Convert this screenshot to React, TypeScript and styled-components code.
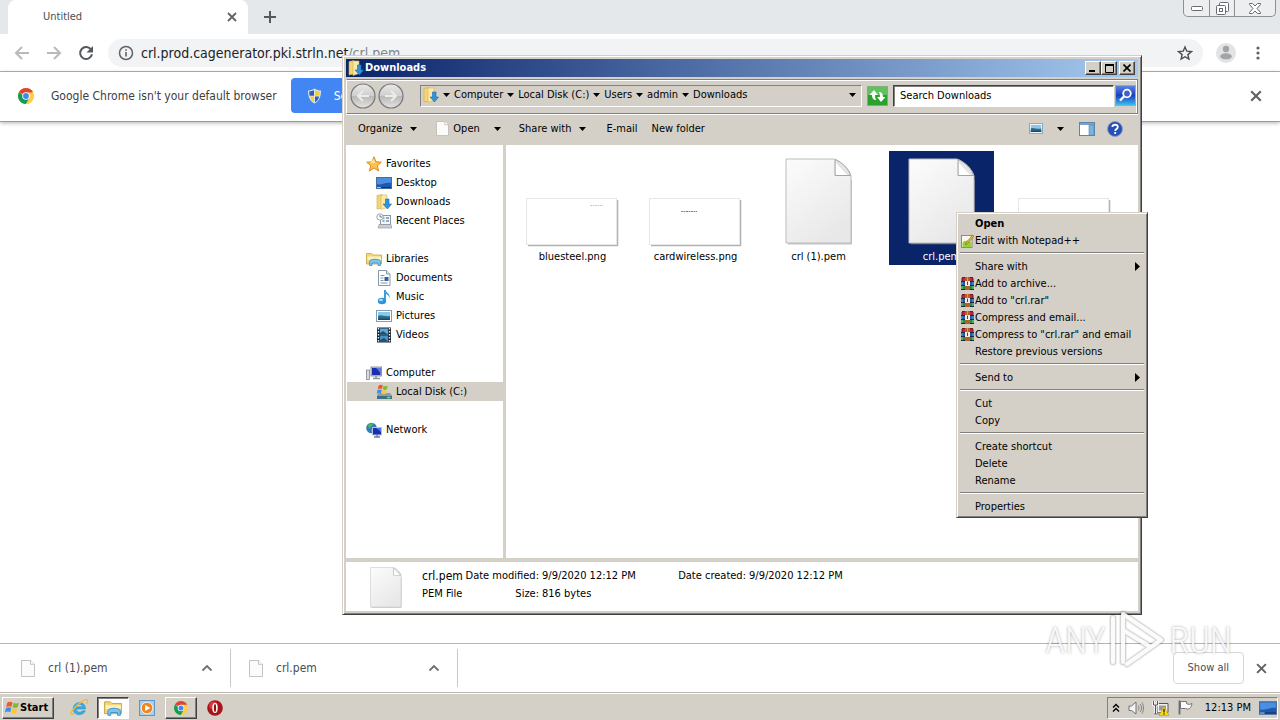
import React from "react";
import styled, { createGlobalStyle, css } from "styled-components";

const FACE = "#d4d0c8";
const UI = `"DejaVu Sans Condensed", "DejaVu Sans", "Noto Sans", sans-serif`;

const GlobalStyle = createGlobalStyle`
  * { box-sizing: border-box; }
  body { margin: 0; font: 11px/14px ${UI}; color: #000; background: #fff; }
  button, input { font: inherit; color: inherit; }
  button { background: none; border: 0; padding: 0; margin: 0; text-align: left; }
  a { color: inherit; text-decoration: none; }
  svg { display: block; flex: none; }
`;

/* ---------- Browser ---------- */

const Desktop = styled.div`
  position: relative;
  display: flex;
  flex-direction: column;
  min-height: 100vh;
  overflow: hidden;
`;

const TabStrip = styled.header`
  display: flex;
  align-items: flex-start;
  height: 34px;
  padding: 0 4px 0 8px;
  background: #e5e8eb;
`;

const Tab = styled.div`
  display: flex;
  align-items: center;
  justify-content: space-between;
  width: 240px;
  height: 34px;
  padding: 0 11px 0 35px;
  background: #fff;
  border-radius: 8px 8px 0 0;
  color: #4a4d51;
`;

const NewTab = styled.button`
  margin: 11px 0 0 16px;
`;

const CaptionGroup = styled.div`
  display: flex;
  height: 17px;
  margin-left: auto;
  border: 1px solid #8d9094;
  border-top: 0;
  border-radius: 0 0 5px 5px;
  background: #eceef0;
`;

const CaptionButton = styled.button<{ $wide?: boolean }>`
  display: flex;
  align-items: center;
  justify-content: center;
  width: ${(p) => (p.$wide ? 41 : 25)}px;
  & + & { border-left: 1px solid #8d9094; }
`;

const BrowserBar = styled.div`
  display: flex;
  align-items: center;
  height: 38px;
  padding: 0 20px 0 14px;
  background: #fff;
  border-bottom: 1px solid #b4b5b7;
`;

const NavButtons = styled.div`
  display: flex;
  gap: 16px;
  margin-right: 14px;
`;

const Omnibox = styled.div`
  display: flex;
  flex: 1;
  align-items: center;
  height: 28px;
  padding: 0 10px;
  gap: 7px;
  border-radius: 14px;
  background: #f1f3f4;
  font-size: 14px;
  line-height: 18px;
  color: #202124;
`;

const UrlPath = styled.span`
  color: #80868b;
`;

const UrlText = styled.span`
  flex: 1;
`;

const BrowserMenu = styled.div`
  display: flex;
  align-items: center;
  gap: 20px;
  margin-left: 13px;
`;

const InfoBar = styled.div`
  display: flex;
  align-items: center;
  height: 50px;
  padding: 0 18px 2px;
  background: #fff;
  border-bottom: 1px solid #9b9b9b;
  box-shadow: 0 1px 4px rgba(0, 0, 0, 0.3);
  font-size: 12px;
  color: #3c4043;
`;

const InfoText = styled.span`
  margin: 0 14px 0 17px;
`;

const DefaultButton = styled.button`
  display: flex;
  align-items: center;
  gap: 12px;
  height: 35px;
  padding: 0 16px;
  border-radius: 4px;
  background: #4285f4;
  color: #fff;
`;

const Push = styled.div`
  display: flex;
  margin-left: auto;
`;

const PageArea = styled.main`
  flex: 1;
  min-height: 300px;
`;

const Shelf = styled.footer`
  display: flex;
  align-items: center;
  height: 49px;
  padding-right: 13px;
  border-top: 1px solid #b4b5b7;
  background: #fff;
  color: #4a4d51;
`;

const ShelfItem = styled.button`
  display: flex;
  align-items: center;
  gap: 13px;
  width: 227px;
  height: 38px;
  padding: 0 17px 0 18px;
  border-right: 1px solid #c8c9cb;
  font-size: 12px;
  &:first-child { width: 231px; padding-left: 21px; }
`;

const ShelfName = styled.span`
  flex: 1;
`;

const ShowAll = styled.button`
  height: 32px;
  padding: 0 14px;
  margin: 0 12px 0 auto;
  border: 1px solid #d5d7da;
  border-radius: 4px;
`;

/* ---------- Taskbar ---------- */

const Taskbar = styled.nav`
  display: flex;
  align-items: center;
  height: 28px;
  padding: 2px 2px 0;
  background: ${FACE};
  border-top: 1px solid #b9b6b0;
  box-shadow: inset 0 1px #fff;
`;

const raised = css`
  border: 1px solid;
  border-color: #fff #404040 #404040 #fff;
  box-shadow: inset -1px -1px #808080;
`;

const sunken = css`
  border: 1px solid;
  border-color: #404040 #fff #fff #404040;
  box-shadow: inset 1px 1px #808080;
`;

const StartButton = styled.button`
  display: flex;
  align-items: center;
  width: 52px;
  height: 22px;
  padding-left: 1px;
  margin-right: 8px;
  font-weight: bold;
  background: ${FACE};
  ${raised}
`;

const TaskButton = styled.button<{ $state?: "active" | "open" }>`
  display: flex;
  align-items: center;
  justify-content: center;
  width: ${(p) => (p.$state ? 32 : 34)}px;
  height: 22px;
  margin-right: 1px;
  ${(p) => p.$state === "open" && raised}
  ${(p) => p.$state === "active" && css`${sunken} background: #fdfdfc;`}
`;

const Tray = styled.div`
  display: flex;
  align-items: center;
  gap: 8px;
  height: 22px;
  margin-left: auto;
  padding: 0 0 0 4px;
  border: 1px solid;
  border-color: #808080 #fff #fff #808080;
`;

const Clock = styled.time`
  margin-left: 4px;
`;

/* ---------- Explorer window ---------- */

const Window = styled.section`
  position: absolute;
  top: 55px;
  right: 138px;
  bottom: 105px;
  left: 342px;
  display: flex;
  flex-direction: column;
  padding: 3px;
  border: 1px solid;
  border-color: ${FACE} #404040 #404040 ${FACE};
  background: ${FACE};
  box-shadow: inset 1px 1px #fff, inset -1px -1px #808080;
`;

const TitleBar = styled.div`
  display: flex;
  align-items: center;
  height: 18px;
  padding: 0 3px 0 2px;
  background: linear-gradient(90deg, #0a246a, #a6caf0);
  color: #fff;
`;

const Title = styled.h1`
  flex: 1;
  margin: 0 0 0 1px;
  font-size: 11px;
  line-height: 14px;
`;

const TitleButton = styled.button`
  display: flex;
  align-items: center;
  justify-content: center;
  width: 16px;
  height: 14px;
  background: ${FACE};
  ${raised}
  &:last-child { margin-left: 2px; }
`;

const AddressBand = styled.div`
  display: flex;
  align-items: center;
  height: 35px;
  margin-top: 2px;
  padding: 0 1px 2px 3px;
  border: 1px solid #808080;
  border-left-color: #fff;
  box-shadow: inset 0 1px #fff, inset -1px 0 #fff, 0 1px #fff;
`;

const History = styled.div`
  display: flex;
  gap: 2px;
`;

const Breadcrumbs = styled.div`
  display: flex;
  flex: 1;
  align-items: center;
  height: 22px;
  margin: 0 5px 0 16px;
  padding: 0 5px 1px 2px;
  border: 1px solid;
  border-color: #808080 #fff #fff #808080;
`;

const Crumb = styled.button`
  display: flex;
  align-items: center;
  gap: 4px;
  margin-left: 4px;
`;

const SearchInput = styled.input`
  width: 221px;
  height: 22px;
  margin: 0 1px 0 5px;
  padding: 0 6px;
  background: #fff;
  border-radius: 0;
  ${sunken}
  &::placeholder { color: #000; opacity: 1; }
`;

const CommandBar = styled.div`
  display: flex;
  align-items: center;
  height: 31px;
  padding: 0 15px 2px 12px;
`;

const Command = styled.button<{ $space: number; $gap?: number }>`
  display: flex;
  align-items: center;
  gap: ${(p) => p.$gap ?? 8}px;
  margin-right: ${(p) => p.$space}px;
`;

const WindowBody = styled.div`
  display: flex;
  flex: 1;
  background: #fff;
`;

const NavPane = styled.nav`
  display: flex;
  flex-direction: column;
  gap: 19px;
  width: 160px;
  padding-top: 9px;
  padding-left: 1px;
  border-right: 3px solid ${FACE};
`;

const NavGroup = styled.div`
  display: flex;
  flex-direction: column;
`;

const NavRow = styled.a<{ $child?: boolean; $selected?: boolean }>`
  display: flex;
  align-items: center;
  gap: 4px;
  height: 19px;
  padding-top: 1px;
  padding-left: ${(p) => (p.$child ? 29 : 19)}px;
  background: ${(p) => (p.$selected ? FACE : "transparent")};
`;

const Files = styled.div`
  display: flex;
  flex: 1;
  align-items: flex-start;
  gap: 18px;
  padding: 6px 14px;
`;

const FileTile = styled.button<{ $selected?: boolean }>`
  display: flex;
  flex-direction: column;
  align-items: center;
  justify-content: flex-end;
  gap: 3px;
  width: 105px;
  height: 114px;
  padding-bottom: 1px;
  background: ${(p) => (p.$selected ? "#0a246a" : "transparent")};
  color: ${(p) => (p.$selected ? "#fff" : "#000")};
`;

const FileLabel = styled.span`
  height: 14px;
`;

const Details = styled.div`
  display: flex;
  align-items: flex-start;
  gap: 20px;
  height: 53px;
  padding: 5px 0 0 24px;
  border-top: 4px solid ${FACE};
  background: #fff;
`;

const DetailGrid = styled.div`
  display: grid;
  grid-template-columns: 41px 74px 131px 72px auto;
  column-gap: 2px;
  line-height: 18px;
`;

const DetailName = styled.span`
  font-size: 12px;
`;

const DetailLabel = styled.span`
  text-align: right;
`;

const DetailValue = styled.span`
  padding-left: 1px;
`;

/* ---------- Context menu ---------- */

const Menu = styled.div`
  position: absolute;
  top: 212px;
  left: 956px;
  width: 192px;
  padding: 2px;
  border: 1px solid;
  border-color: ${FACE} #404040 #404040 ${FACE};
  background: ${FACE};
  box-shadow: inset 1px 1px #fff, inset -1px -1px #808080;
`;

const MenuRow = styled.button<{ $bold?: boolean }>`
  display: flex;
  align-items: center;
  width: 100%;
  height: 17px;
  padding: 0 5px 0 2px;
  font-weight: ${(p) => (p.$bold ? "bold" : "normal")};
`;

const MenuIcon = styled.span`
  width: 14px;
`;

const MenuText = styled.span`
  flex: 1;
`;

const MenuRule = styled.hr`
  height: 2px;
  margin: 3px 1px 4px;
  border: 0;
  border-top: 1px solid #808080;
  border-bottom: 1px solid #fff;
`;

const Watermark = styled.div`
  position: absolute;
  right: 48px;
  bottom: 48px;
  display: flex;
  align-items: center;
  gap: 4px;
  font: 300 36px/40px "Roboto Condensed", Roboto, sans-serif;
  color: rgba(255, 255, 255, 0.9);
  text-shadow: 0 0 3px rgba(0, 0, 0, 0.35);
  pointer-events: none;
`;

/* ---------- Icons ---------- */

const Arrow = ({ w = 7 }: { w?: number }) => (
  <svg width={w} height={4} viewBox="0 0 7 4"><path d="M0 0h7L3.500 4z" fill="#000" /></svg>
);

const SubArrow = () => (
  <svg width="5" height="9" viewBox="0 0 5 9"><path d="M0 0v9l5-4.500z" fill="#000" /></svg>
);

const Cross = ({ size = 10, color = "#5f6368" }) => (
  <svg width={size} height={size} viewBox="0 0 10 10"><path d="M1 1l8 8M9 1l-8 8" stroke={color} strokeWidth="1.800" /></svg>
);

const BackIcon = ({ flip = false }) => (
  <svg width="16" height="16" viewBox="0 0 16 16">
    <path d={flip ? "M1 8h13M8 2l6 6-6 6" : "M15 8H2M8 2L2 8l6 6"} fill="none" stroke="#b8babd" strokeWidth="2" />
  </svg>
);

const ReloadIcon = () => (
  <svg width="16" height="16" viewBox="0 0 16 16">
    <path d="M13.200 4.800A6 6 0 1 0 14 9.300" fill="none" stroke="#55585c" strokeWidth="2" />
    <path d="M15 1v6.500H8.500z" fill="#55585c" />
  </svg>
);

const InfoIcon = () => (
  <svg width="16" height="16" viewBox="0 0 16 16">
    <circle cx="8" cy="8" r="6.500" fill="none" stroke="#5f6368" strokeWidth="1.500" />
    <path d="M8 7v4.500M8 4.300v1.500" stroke="#5f6368" strokeWidth="1.600" />
  </svg>
);

const StarIcon = () => (
  <svg width="16" height="16" viewBox="0 0 16 16">
    <path d="M8 2l1.800 4.200 4.600.4-3.500 3 1 4.500L8 11.700l-3.900 2.400 1-4.500-3.500-3 4.600-.4z" fill="none" stroke="#4a4d51" strokeWidth="1.400" />
  </svg>
);

const AvatarIcon = () => (
  <svg width="20" height="20" viewBox="0 0 20 20">
    <circle cx="10" cy="10" r="10" fill="#e2e3e5" />
    <circle cx="10" cy="6" r="3.200" fill="#a2a4a6" />
    <ellipse cx="10" cy="13.300" rx="5.800" ry="3" fill="#a2a4a6" />
  </svg>
);

const DotsIcon = () => (
  <svg width="4" height="16" viewBox="0 0 4 16" fill="#5f6368">
    <circle cx="2" cy="3" r="1.600" /><circle cx="2" cy="8" r="1.600" /><circle cx="2" cy="13" r="1.600" />
  </svg>
);

const ChromeIcon = ({ size = 16 }) => (
  <svg width={size} height={size} viewBox="0 0 16 16">
    <circle cx="8" cy="8" r="8" fill="#ffcd40" />
    <path d="M8 8L1.100 4A8 8 0 0 1 14.900 4z" fill="#db4437" />
    <path d="M1.100 4A8 8 0 0 0 8 16l3.400-6H8z" fill="#0f9d58" />
    <path d="M8 16A8 8 0 0 0 14.900 4.400H8l3.400 5.600z" fill="#ffcd40" />
    <circle cx="8" cy="8" r="3.800" fill="#fff" />
    <circle cx="8" cy="8" r="2.900" fill="#4285f4" />
  </svg>
);

const ShieldIcon = () => (
  <svg width="15" height="16" viewBox="0 0 15 16">
    <path d="M7.500.5C5.500 2 3.200 2.500 1 2.500c0 6 1.500 10.500 6.500 13 5-2.500 6.500-7 6.500-13-2.200 0-4.500-.5-6.500-2z" fill="#dfe6ec" />
    <path d="M7 2C5.500 3 4 3.400 2.200 3.500c0 1.600.1 3 .4 4.300H7z" fill="#2f62b5" />
    <path d="M8 2c1.500 1 3 1.400 4.800 1.500 0 1.600-.1 3-.4 4.300H8z" fill="#f6d02f" />
    <path d="M2.800 8.500H7v5.700c-2.200-1.200-3.500-3-4.200-5.700z" fill="#f6d02f" />
    <path d="M12.200 8.500H8v5.700c2.200-1.200 3.500-3 4.200-5.700z" fill="#2f62b5" />
  </svg>
);

const PageIcon = ({ w, h }: { w: number; h: number }) => (
  <svg width={w} height={h} viewBox="0 0 14 18" preserveAspectRatio="none">
    <path d="M.5.500h9l4 4v13H.500z" fill="#fbfbfa" stroke="#b0b0ae" strokeWidth=".8" />
    <path d="M9.500.500v4h4" fill="#fff" stroke="#b0b0ae" strokeWidth=".8" />
  </svg>
);

const BigPage = ({ w = 68, h = 89 }: { w?: number; h?: number }) => (
  <svg width={w} height={h} viewBox="0 0 68 89">
    <defs>
      <linearGradient id="sheet" x1="0" y1="0" x2="0.600" y2="1">
        <stop offset="0" stopColor="#fcfcfc" /><stop offset="1" stopColor="#e8e8e8" />
      </linearGradient>
    </defs>
    <path d="M3 85.500h63V22" fill="none" stroke="#8a8a8a" strokeOpacity=".5" strokeWidth="2" />
    <path d="M1 1h48c6 2 16 11 17 17v67H1z" fill="url(#sheet)" stroke="#bcbcbc" />
    <path d="M50 1.500v16h15.500C64 11 57 4 50 1.500z" fill="#e4e4e4" stroke="#a4a4a4" />
    <path d="M51 17h11L51 5z" fill="#fff" />
  </svg>
);

const Thumb = ({ mark }: { mark?: "right" | "left" }) => (
  <svg width="93" height="49" viewBox="0 0 93 49">
    <path d="M2 47.500h90M91.500 2v46" stroke="#b4b4b4" strokeWidth="1.600" fill="none" />
    <rect x=".5" y=".5" width="90" height="46" fill="#fff" stroke="#e6e6e6" />
    {mark === "right" && <path d="M64 7.500h13" stroke="#ccc" strokeDasharray="2 .5" />}
    {mark === "left" && <path d="M32 13.500h16" stroke="#888" strokeDasharray="2 .5" />}
  </svg>
);

const FolderDown = () => (
  <svg width="16" height="16" viewBox="0 0 16 16">
    <path d="M1 1.500l5-1V14l-5 1z" fill="#f3d67a" stroke="#d2a83c" strokeWidth=".6" />
    <path d="M5 1h6v12.500l-6 2z" fill="#fbe9a8" stroke="#d9b24c" strokeWidth=".6" />
    <path d="M9.500 5h3.500v5h2.500L11.500 15 7 10h2.500z" fill="#2f93dd" stroke="#1b6cb3" strokeWidth=".6" />
  </svg>
);

const CircleNav = ({ flip = false }) => (
  <svg width="26" height="26" viewBox="0 0 26 26">
    <defs>
      <linearGradient id="orb" x1="0" y1="0" x2="0" y2="1">
        <stop offset="0" stopColor="#e9e9e8" /><stop offset=".48" stopColor="#cfcfce" />
        <stop offset=".52" stopColor="#b9b9b8" /><stop offset="1" stopColor="#e4e4e2" />
      </linearGradient>
    </defs>
    <circle cx="13" cy="13" r="12" fill="url(#orb)" stroke="#77777a" strokeWidth="1.200" />
    <path d={flip ? "M7 13h11M13 8l5 5-5 5" : "M19 13H8M13 8l-5 5 5 5"} fill="none" stroke="#ececec" strokeWidth="2" />
  </svg>
);

const RefreshGreen = () => (
  <svg width="21" height="20" viewBox="0 0 21 20">
    <rect x=".5" y=".5" width="20" height="19" fill="#2aa12c" stroke="#7fae7f" />
    <rect x="1" y="1" width="19" height="8" fill="#5fc25c" />
    <path d="M7 4L2.500 9H5c0 4 2 5 4.500 5-1.500-1.300-1.500-3-1.300-5H11zM14 16l4.500-5H16c0-4-2-5-4.500-5 1.500 1.300 1.500 3 1.300 5H10z" fill="#fff" />
  </svg>
);

const SearchBlue = () => (
  <svg width="21" height="21" viewBox="0 0 21 21">
    <defs>
      <linearGradient id="srch" x1="0" y1="0" x2="0" y2="1">
        <stop offset="0" stopColor="#5a86e0" /><stop offset=".5" stopColor="#1c3fc0" /><stop offset="1" stopColor="#3cc4f2" />
      </linearGradient>
    </defs>
    <rect x=".5" y=".5" width="20" height="20" fill="url(#srch)" stroke="#8fa9dc" />
    <circle cx="12" cy="8.500" r="3.800" fill="#3d62cc" stroke="#fff" strokeWidth="1.800" />
    <path d="M9 11.500L5 15.500" stroke="#fff" strokeWidth="2.400" />
  </svg>
);

const PictureIcon = ({ w = 16, h = 12 }) => (
  <svg width={w} height={h} viewBox="0 0 16 12">
    <rect x=".5" y=".5" width="15" height="11" fill="#fff" stroke="#7f9db5" />
    <rect x="2" y="2" width="12" height="8" fill="#8cc8ec" />
    <path d="M2 6c3-2 6 1 12 0v4H2z" fill="#2d6c86" />
    <path d="M2 8.500h12V10H2z" fill="#184c66" />
  </svg>
);

const PaneIcon = () => (
  <svg width="16" height="14" viewBox="0 0 16 14">
    <rect x=".5" y=".5" width="15" height="13" fill="#fff" stroke="#5e84a8" />
    <path d="M1 2h14" stroke="#4f83b5" strokeWidth="1.500" />
    <rect x="10" y="3" width="5" height="10" fill="#79b4de" stroke="#5e84a8" strokeWidth=".6" />
  </svg>
);

const HelpIcon = () => (
  <svg width="16" height="16" viewBox="0 0 16 16">
    <circle cx="8" cy="8" r="7.500" fill="#2750b4" stroke="#8a9cc4" />
    <path d="M5.300 6C5.500 3 11 3 10.800 6c0 2-2.600 2-2.600 4M8.200 11v2" fill="none" stroke="#fff" strokeWidth="1.800" />
  </svg>
);

const FavStar = () => (
  <svg width="16" height="16" viewBox="0 0 16 16">
    <path d="M8 .8l2 5 5.300.4-4 3.500 1.300 5.300L8 12l-4.600 3 1.300-5.300-4-3.500L6 5.800z" fill="#fcc34c" stroke="#e08a1c" />
    <path d="M8 3l1 4-5 0z" fill="#ffe9a6" />
  </svg>
);

const DesktopIcon = ({ size = 16 }) => (
  <svg width={size} height={size} viewBox="0 0 16 16">
    <rect x=".5" y="2.500" width="15" height="11" fill="#1e58b0" stroke="#4b6c98" />
    <path d="M1 3h14v5C9 7 5 11 1 9z" fill="#4a8fe0" />
    <path d="M1 12.500h14" stroke="#12305f" /><path d="M1 12.500h4" stroke="#8fd0f5" />
  </svg>
);

const RecentIcon = () => (
  <svg width="16" height="16" viewBox="0 0 16 16">
    <rect x="4.500" y="2.500" width="10" height="9" fill="#f4f7fa" stroke="#8799a8" />
    <path d="M6.500 5h2M10 5h3M6.500 8h2M10 8h3" stroke="#6f93b8" strokeWidth="1.500" />
    <path d="M3 11.500h12l1 3.500H2z" fill="#c9ced2" stroke="#8b9196" strokeWidth=".6" />
    <circle cx="4" cy="4" r="3.200" fill="#fff" stroke="#97a5b0" /><path d="M4 2v2h2" stroke="#555" strokeWidth=".8" fill="none" />
  </svg>
);

const LibraryIcon = ({ size = 16 }) => (
  <svg width={size} height={size} viewBox="0 0 16 16">
    <path d="M.5 2.500h5l1.500 1.500h8.500V13H.500z" fill="#f2d67c" stroke="#c9a23a" strokeWidth=".8" />
    <path d="M1.500 5.500h13.500V9H1.500z" fill="#fbf0bf" />
    <path d="M3.500 14.500v-4c0-3 11-3 11 0v4H12V12H6v2.500z" fill="#7cc4ee" stroke="#3d8fc6" strokeWidth=".8" />
  </svg>
);

const DocIcon = () => (
  <svg width="16" height="16" viewBox="0 0 16 16">
    <path d="M2.500.500h8l3.500 3.500v11.500H2.500z" fill="#fff" stroke="#8599ab" />
    <path d="M10.500.500V4H14" fill="#dfe9f2" stroke="#8599ab" />
    <path d="M4.500 5.500h4M4.500 8h3M4.500 10.500h3M4.500 13h7" stroke="#7a95b5" /><rect x="8.500" y="7" width="4" height="4" fill="#3e5f92" />
  </svg>
);

const MusicIcon = () => (
  <svg width="16" height="16" viewBox="0 0 16 16">
    <path d="M9 1v10" stroke="#2d8fd0" strokeWidth="1.800" />
    <path d="M9 0c0 3 6 4 4.500 10 0-3.500-2.500-5-4.500-5z" fill="#3aa3e4" />
    <ellipse cx="6" cy="12" rx="4.200" ry="3.300" fill="#2f96da" /><ellipse cx="5" cy="10.900" rx="2" ry="1.200" fill="#a8dcf8" />
  </svg>
);

const VideoIcon = () => (
  <svg width="16" height="16" viewBox="0 0 16 16">
    <rect x="1" y=".5" width="14" height="15" fill="#1c2833" />
    <rect x="4" y="1.500" width="8" height="6" fill="#5fa9d8" /><rect x="4" y="8.500" width="8" height="6" fill="#4791c2" />
    <path d="M4 6l3-2 5 3.500H4zM4 13l4-2 4 3.500H4z" fill="#1e5075" />
    <path d="M2.500 1v14M13.500 1v14" stroke="#e8eef2" strokeWidth="1.400" strokeDasharray="1.500 1.500" />
  </svg>
);

const ComputerIcon = () => (
  <svg width="16" height="16" viewBox="0 0 16 16">
    <rect x=".5" y="5" width="3" height="9.500" fill="#d7dbe0" stroke="#868c94" strokeWidth=".8" />
    <rect x="5" y="2" width="10.500" height="9" fill="#c5cbd4" stroke="#767f8c" strokeWidth=".8" />
    <rect x="6" y="3" width="8.500" height="7" fill="#1b2fae" /><path d="M10 3h4.500v5z" fill="#5a7ae8" />
    <path d="M7 13.500h7M10 11v2" stroke="#8b929c" strokeWidth="1.500" />
  </svg>
);

const Flag = () => (
  <>
    <path d="M3 2c2-1.500 3.500-1 5-.3L7 6c-1.500-.7-3-1-5 .3z" fill="#ee5a2a" />
    <path d="M9 2c1.500.8 3 1 5 0l-1.200 4.300c-2 1-3.500.7-4.800 0z" fill="#7cbc35" />
    <path d="M1.800 7.200c2-1.200 3.500-1 5-.2l-1 4c-1.500-.8-3-1-5 .2z" fill="#3a8fe0" />
    <path d="M7.700 7.200c1.500.8 3 1 5 0l-1.200 4.300c-2 1-3.500.7-4.800 0z" fill="#fcc62c" />
  </>
);

const DiskIcon = () => (
  <svg width="16" height="16" viewBox="0 0 16 16">
    <path d="M2 9h12l2 2.500V15H1v-3.500z" fill="#8d9ca6" /><path d="M1 12h15v3H1z" fill="#3f6f83" />
    <path d="M11 13.500h3.500" stroke="#6fe06a" strokeWidth="1.500" />
    <g transform="scale(.85)"><Flag /></g>
  </svg>
);

const WindowsFlag = () => (
  <svg width="16" height="15" viewBox="0 0 15 13"><Flag /></svg>
);

const NetworkIcon = () => (
  <svg width="16" height="16" viewBox="0 0 16 16">
    <circle cx="5.500" cy="6" r="5.300" fill="#2a7fc4" />
    <path d="M2 3c2-2 5-2.500 5-1S4 5 3 7zM5 8c2-1 3 0 3 1s-1 2-2 2z" fill="#55b848" />
    <rect x="6.500" y="5.500" width="9" height="7.500" fill="#1b2fae" stroke="#b8c2d8" />
    <path d="M10 6h5v4z" fill="#4f74e8" /><path d="M8 15h6M11 13v2" stroke="#6e7b96" strokeWidth="1.400" />
  </svg>
);

const NotepadIcon = () => (
  <svg width="13" height="14" viewBox="0 0 13 14">
    <rect x=".5" y="1.500" width="10.500" height="12" fill="#f8f8f0" stroke="#777" strokeWidth=".8" />
    <path d="M1.500 8c3-2 6-2 9 0v5h-9z" fill="#98cf3a" />
    <path d="M5 9l6.500-8 1.500 1.200-6.500 7.500-2 .8z" fill="#e9c53c" stroke="#6f5a1c" strokeWidth=".6" />
  </svg>
);

const RarIcon = () => (
  <svg width="13" height="13" viewBox="0 0 13 13">
    <rect x="1" width="11" height="4" fill="#b8283a" /><rect y="4" width="13" height="5" fill="#2a55b8" />
    <rect y="9" width="13" height="4" fill="#2c8a3e" />
    <path d="M1 .5h11" stroke="#7a1420" /><path d="M0 4.500h13M0 8.500h13M0 12.500h13" stroke="#1d2340" />
    <path d="M1 1v3M12 1v3" stroke="#5f1a2a" /><path d="M1 5v3M12 5v3" stroke="#35b8dc" /><path d="M1 9v3M12 9v3" stroke="#6fd67a" />
    <rect x="4" width="5" height="13" fill="#b5602a" />
    <rect x="4" y="4" width="5" height="5" fill="#f4ead6" /><path d="M6.500 0v8" stroke="#e8963c" /><rect x="6" y="5" width="1" height="3" fill="#8a2a20" />
  </svg>
);

const IeIcon = () => (
  <svg width="19" height="18" viewBox="0 0 19 18">
    <path d="M15.500 10H6.200c.3 3.800 5 4 6.300 1.800h2.800C13 17.500 3 17 3.200 9.500 3.500 2 15.500 1 15.500 10zM6.300 7.800h6.200c-.4-3-5.700-3.200-6.200 0z" fill="#3aaee6" stroke="#1f84bf" strokeWidth=".5" />
    <path d="M4 14c-4 4-4 0 0-4.500C8 4.500 16-1 17.500 1c.8 1-.2 2.500-1 3.800" fill="none" stroke="#f0bb38" strokeWidth="1.300" />
  </svg>
);

const MediaIcon = () => (
  <svg width="16" height="16" viewBox="0 0 16 16">
    <rect x=".5" y=".5" width="15" height="15" fill="#a9cdee" stroke="#5d95c9" />
    <circle cx="8" cy="8" r="5.800" fill="#f0861c" stroke="#fff" strokeWidth=".8" /><path d="M6.200 5v6l5-3z" fill="#fff" />
  </svg>
);

const OperaIcon = () => (
  <svg width="16" height="16" viewBox="0 0 16 16">
    <circle cx="8" cy="8" r="7.800" fill="#a8141b" /><ellipse cx="6.500" cy="5.500" rx="4.500" ry="4" fill="#d8393d" />
    <ellipse cx="8" cy="8" rx="2.700" ry="5" fill="#fff" /><ellipse cx="8" cy="8" rx="1.100" ry="4" fill="#8f1016" />
  </svg>
);

const SpeakerIcon = () => (
  <svg width="16" height="14" viewBox="0 0 16 14">
    <path d="M1 5h2.500L8 1v12L3.500 9.500H1z" fill="#f5f5f5" stroke="#666" strokeWidth=".9" />
    <path d="M10 4.500c1.300 1.500 1.300 3.500 0 5M12 3c2.200 2.500 2.200 5.500 0 8M14 1.500c2 3 2 8 0 11" fill="none" stroke="#7a7a7a" strokeWidth=".9" />
  </svg>
);

const NetWarnIcon = () => (
  <svg width="17" height="16" viewBox="0 0 17 16">
    <path d="M5 3.500h11v9H5z" fill="#f0f0f0" stroke="#555" /><rect x="7" y="5.500" width="7" height="5" fill="#9a9a9a" />
    <path d="M1.500 1v4h4V1M3.500 5v9M2 14h6" fill="none" stroke="#fff" strokeWidth="2.400" /><path d="M1.500 1v4h4V1M3.500 5v9M2 14h6" fill="none" stroke="#555" />
    <path d="M12 6.500l5 9H7z" fill="#f8dc1c" stroke="#b59a10" strokeWidth=".6" /><path d="M12 9v3.500M12 13.300v1.200" stroke="#222" strokeWidth="1.300" />
  </svg>
);

const FlagIcon = () => (
  <svg width="16" height="15" viewBox="0 0 16 15">
    <path d="M2.500.500v14" stroke="#6b6b6b" strokeWidth="1.800" />
    <path d="M3.500 1.500h6v2c2 1.200 3.500 1 5.500 0-1 5-3 6.500-6.500 5h-5z" fill="#fafafa" stroke="#6b6b6b" strokeWidth=".9" />
  </svg>
);

const ChevronUp = () => (
  <svg width="12" height="8" viewBox="0 0 12 8"><path d="M1.500 6.500L6 2l4.500 4.500" fill="none" stroke="#6d7074" strokeWidth="1.800" /></svg>
);

const PLAY = "M4 8v44M14 52V4l38 26-34 24M14 20l26 16";

const PlayMark = () => (
  <svg width="56" height="62" viewBox="0 0 56 62" fill="none" strokeLinejoin="round" strokeLinecap="round">
    <path d={PLAY} stroke="#000" strokeOpacity=".07" strokeWidth="8" />
    <path d={PLAY} stroke="#000" strokeOpacity=".1" strokeWidth="6" />
    <path d={PLAY} stroke="#fff" strokeOpacity=".9" strokeWidth="4" />
  </svg>
);

/* ---------- Data ---------- */

type NavItem = { name: string; icon: React.ReactNode; selected?: boolean };

const navGroups: NavItem[][] = [
  [
    { name: "Favorites", icon: <FavStar /> },
    { name: "Desktop", icon: <DesktopIcon /> },
    { name: "Downloads", icon: <FolderDown /> },
    { name: "Recent Places", icon: <RecentIcon /> },
  ],
  [
    { name: "Libraries", icon: <LibraryIcon /> },
    { name: "Documents", icon: <DocIcon /> },
    { name: "Music", icon: <MusicIcon /> },
    { name: "Pictures", icon: <PictureIcon /> },
    { name: "Videos", icon: <VideoIcon /> },
  ],
  [
    { name: "Computer", icon: <ComputerIcon /> },
    { name: "Local Disk (C:)", icon: <DiskIcon />, selected: true },
  ],
  [{ name: "Network", icon: <NetworkIcon /> }],
];

type MenuEntry = { text: string; icon?: "npp" | "rar"; bold?: boolean; sub?: boolean };

const menuGroups: MenuEntry[][] = [
  [{ text: "Open", bold: true }, { text: "Edit with Notepad++", icon: "npp" }],
  [
    { text: "Share with", sub: true },
    { text: "Add to archive...", icon: "rar" },
    { text: 'Add to "crl.rar"', icon: "rar" },
    { text: "Compress and email...", icon: "rar" },
    { text: 'Compress to "crl.rar" and email', icon: "rar" },
    { text: "Restore previous versions" },
  ],
  [{ text: "Send to", sub: true }],
  [{ text: "Cut" }, { text: "Copy" }],
  [{ text: "Create shortcut" }, { text: "Delete" }, { text: "Rename" }],
  [{ text: "Properties" }],
];

const crumbs = ["Computer", "Local Disk (C:)", "Users", "admin", "Downloads"];

/* ---------- Page ---------- */

const Browser = () => (
  <>
    <TabStrip>
      <Tab>Untitled<button aria-label="Close tab"><Cross /></button></Tab>
      <NewTab aria-label="New tab">
        <svg width="12" height="12" viewBox="0 0 12 12"><path d="M6 0v12M0 6h12" stroke="#55585c" strokeWidth="2" /></svg>
      </NewTab>
      <CaptionGroup>
        <CaptionButton aria-label="Minimize">
          <svg width="12" height="5" viewBox="0 0 12 5"><rect x=".5" y=".5" width="11" height="4" rx="1" fill="#fff" stroke="#666a73" /></svg>
        </CaptionButton>
        <CaptionButton aria-label="Restore">
          <svg width="13" height="13" viewBox="0 0 13 13" fill="#fff" stroke="#666a73">
            <rect x="3.500" y=".5" width="9" height="9" rx="1" /><rect x=".5" y="3.500" width="9" height="9" rx="1" /><rect x="3.500" y="6.500" width="3" height="3" />
          </svg>
        </CaptionButton>
        <CaptionButton $wide aria-label="Close">
          <svg width="12" height="11" viewBox="0 0 12 11"><path d="M.5.500h3L6 3l2.500-2.500h3v1L8 5.500l3.500 4v1h-3L6 8l-2.500 2.500h-3v-1L4 5.500l-3.500-4z" fill="#fff" stroke="#666a73" /></svg>
        </CaptionButton>
      </CaptionGroup>
    </TabStrip>
    <BrowserBar>
      <NavButtons>
        <button aria-label="Back"><BackIcon /></button>
        <button aria-label="Forward"><BackIcon flip /></button>
        <button aria-label="Reload"><ReloadIcon /></button>
      </NavButtons>
      <Omnibox>
        <InfoIcon />
        <UrlText>crl.prod.cagenerator.pki.strln.net<UrlPath>/crl.pem</UrlPath></UrlText>
        <StarIcon />
      </Omnibox>
      <BrowserMenu>
        <AvatarIcon />
        <button aria-label="Menu"><DotsIcon /></button>
      </BrowserMenu>
    </BrowserBar>
    <InfoBar>
      <ChromeIcon />
      <InfoText>Google Chrome isn't your default browser</InfoText>
      <DefaultButton><ShieldIcon />Set as default</DefaultButton>
      <Push><button aria-label="Dismiss"><Cross size={12} /></button></Push>
    </InfoBar>
    <PageArea />
    <Shelf>
      <ShelfItem><PageIcon w={14} h={17} /><ShelfName>crl (1).pem</ShelfName><ChevronUp /></ShelfItem>
      <ShelfItem><PageIcon w={14} h={17} /><ShelfName>crl.pem</ShelfName><ChevronUp /></ShelfItem>
      <ShowAll>Show all</ShowAll>
      <button aria-label="Close shelf"><Cross size={11} /></button>
    </Shelf>
  </>
);

const Explorer = () => (
  <Window>
    <TitleBar>
      <FolderDown />
      <Title>Downloads</Title>
      <TitleButton aria-label="Minimize">
        <svg width="8" height="8" viewBox="0 0 8 8"><path d="M0 7h6" stroke="#000" strokeWidth="2" /></svg>
      </TitleButton>
      <TitleButton aria-label="Maximize">
        <svg width="9" height="9" viewBox="0 0 9 9"><path d="M.5 1v7.500h8V1" fill="none" stroke="#000" /><path d="M0 1h9" stroke="#000" strokeWidth="2" /></svg>
      </TitleButton>
      <TitleButton aria-label="Close">
        <svg width="8" height="8" viewBox="0 0 8 8"><path d="M.5.500l7 7M7.500.500l-7 7" stroke="#000" strokeWidth="1.600" /></svg>
      </TitleButton>
    </TitleBar>
    <AddressBand>
      <History>
        <button aria-label="Back"><CircleNav /></button>
        <button aria-label="Forward"><CircleNav flip /></button>
      </History>
      <Breadcrumbs>
        <FolderDown />
        {crumbs.map((c) => (
          <Crumb key={c}><Arrow />{c}</Crumb>
        ))}
        <Push><Arrow /></Push>
      </Breadcrumbs>
      <button aria-label="Refresh"><RefreshGreen /></button>
      <SearchInput aria-label="Search" placeholder="Search Downloads" />
      <button aria-label="Go"><SearchBlue /></button>
    </AddressBand>
    <CommandBar>
      <Command $space={19}>Organize<Arrow /></Command>
      <Command $space={14} $gap={4}><PageIcon w={13} h={15} />Open</Command>
      <Command $space={18} aria-label="Open with"><Arrow /></Command>
      <Command $space={20}>Share with<Arrow /></Command>
      <Command $space={14}>E-mail</Command>
      <Command $space={0}>New folder</Command>
      <Push><Command $space={15} $gap={14} aria-label="Change view"><PictureIcon w={14} h={11} /><Arrow /></Command></Push>
      <Command $space={12} aria-label="Preview pane"><PaneIcon /></Command>
      <Command $space={0} aria-label="Help"><HelpIcon /></Command>
    </CommandBar>
    <WindowBody>
      <NavPane>
        {navGroups.map((g) => (
          <NavGroup key={g[0].name}>
            {g.map((n, i) => (
              <NavRow key={n.name} href="#" $child={i > 0} $selected={n.selected}>{n.icon}{n.name}</NavRow>
            ))}
          </NavGroup>
        ))}
      </NavPane>
      <Files>
        <FileTile><Thumb mark="right" /><FileLabel>bluesteel.png</FileLabel></FileTile>
        <FileTile><Thumb mark="left" /><FileLabel>cardwireless.png</FileLabel></FileTile>
        <FileTile><BigPage /><FileLabel>crl (1).pem</FileLabel></FileTile>
        <FileTile $selected><BigPage /><FileLabel>crl.pem</FileLabel></FileTile>
        <FileTile aria-label="Image"><Thumb /><FileLabel /></FileTile>
      </Files>
    </WindowBody>
    <Details>
      <BigPage w={32} h={42} />
      <DetailGrid>
        <DetailName>crl.pem</DetailName>
        <DetailLabel>Date modified:</DetailLabel><DetailValue>9/9/2020 12:12 PM</DetailValue>
        <DetailLabel>Date created:</DetailLabel><DetailValue>9/9/2020 12:12 PM</DetailValue>
        <span>PEM File</span>
        <DetailLabel>Size:</DetailLabel><DetailValue>816 bytes</DetailValue>
      </DetailGrid>
    </Details>
  </Window>
);

const ContextMenu = () => (
  <Menu role="menu">
    {menuGroups.map((g, gi) => (
      <React.Fragment key={gi}>
        {gi > 0 && <MenuRule />}
        {g.map((m) => (
          <MenuRow key={m.text} role="menuitem" $bold={m.bold}>
            <MenuIcon>{m.icon === "npp" && <NotepadIcon />}{m.icon === "rar" && <RarIcon />}</MenuIcon>
            <MenuText>{m.text}</MenuText>
            {m.sub && <SubArrow />}
          </MenuRow>
        ))}
      </React.Fragment>
    ))}
  </Menu>
);

export default function App() {
  return (
    <Desktop>
      <GlobalStyle />
      <Browser />
      <Taskbar>
        <StartButton><WindowsFlag />Start</StartButton>
        <TaskButton aria-label="Internet Explorer"><IeIcon /></TaskButton>
        <TaskButton $state="active" aria-label="Explorer"><LibraryIcon size={18} /></TaskButton>
        <TaskButton aria-label="Media Player"><MediaIcon /></TaskButton>
        <TaskButton $state="open" aria-label="Chrome"><ChromeIcon size={14} /></TaskButton>
        <TaskButton aria-label="Opera"><OperaIcon /></TaskButton>
        <Tray>
          <svg width="8" height="10" viewBox="0 0 8 10"><path d="M1 4.500L4 1.500l3 3M1 8.500l3-3 3 3" fill="none" stroke="#000" strokeWidth="1.400" /></svg>
          <SpeakerIcon />
          <NetWarnIcon />
          <FlagIcon />
          <Clock>12:13 PM</Clock>
          <DesktopIcon size={18} />
        </Tray>
      </Taskbar>
      <Explorer />
      <ContextMenu />
      <Watermark>
        ANY
        <PlayMark />
        RUN
      </Watermark>
    </Desktop>
  );
}
